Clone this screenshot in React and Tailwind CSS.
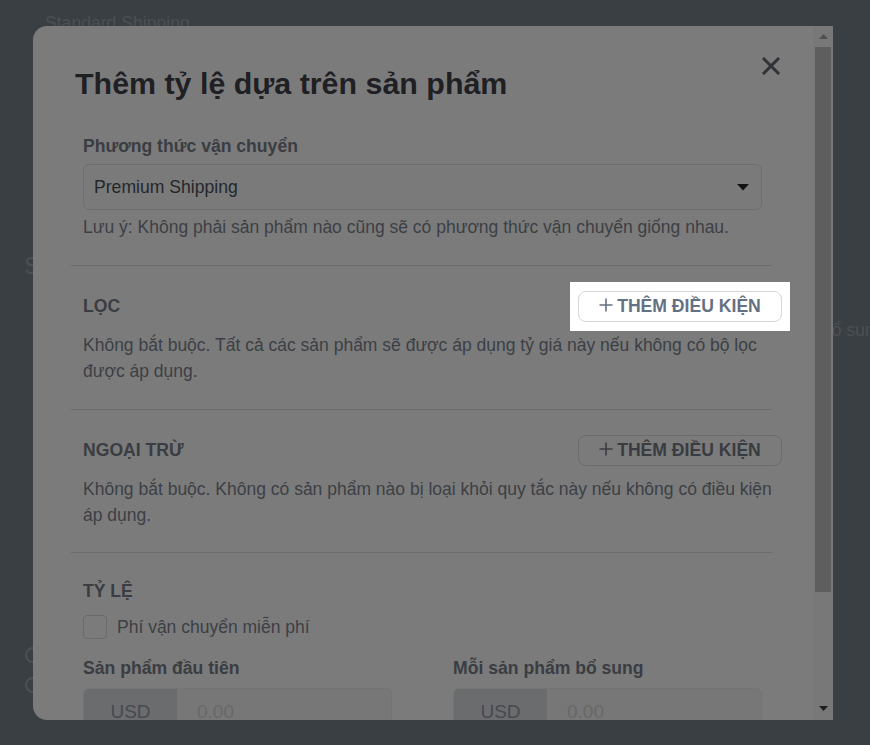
import React from "react";

const font = "font-['Liberation_Sans',Arial,sans-serif]";

const CloseIcon = () => (
  <svg width="18" height="18" viewBox="0 0 18 18" className="shrink-0">
    <path d="M2 2L16 16M16 2L2 16" stroke="#2f3236" strokeWidth="3" strokeLinecap="square" />
  </svg>
);

const PlusIcon = ({ color }) => (
  <svg width="14" height="14" viewBox="0 0 14 14" className="-mt-[3px] shrink-0">
    <path d="M7 0.5V13.5M0.5 7H13.5" stroke={color} strokeWidth="1.6" />
  </svg>
);

const AddButton = ({ highlighted }) => (
  <div className={highlighted ? "-mr-[30px] bg-white px-2 py-[9px]" : "-mr-[30px] px-2 py-[9px]"}>
    <button
      className={
        highlighted
          ? "flex h-[31px] w-[204px] items-center justify-center gap-[4px] rounded-lg border border-[#d5d7da] text-[17.6px] font-bold text-[#647183]"
          : "flex h-[31px] w-[204px] items-center justify-center gap-[4px] rounded-lg border border-[#6b6b6b] text-[17.6px] font-bold text-[#393c41]"
      }
    >
      <PlusIcon color={highlighted ? "#647183" : "#393c41"} />
      THÊM ĐIỀU KIỆN
    </button>
  </div>
);

const CurrencyInput = () => (
  <div className="mt-2 flex h-[48px] overflow-hidden rounded-md border border-[#747474] bg-[#777777]">
    <div className="flex w-[93px] items-center justify-center bg-[#6b6c6e] text-[19px] text-[#46494e]">USD</div>
    <div className="flex flex-1 items-center pl-[20px] text-[19px] text-[#686868]">0.00</div>
  </div>
);

export default function App() {
  return (
    <div className={`relative h-[745px] w-[870px] overflow-hidden bg-[#3a3f43] ${font}`}>
      {/* page behind the overlay */}
      <div className="absolute left-[45px] top-[11px] text-[17.6px] leading-6 text-[#4b5054]">Standard Shipping</div>
      <div className="absolute left-[24px] top-[248px] text-[24px] text-[#4b5054]">S</div>
      <div className="absolute left-[822px] top-[318px] whitespace-nowrap text-[17.6px] leading-6 text-[#4b5054]">bổ sung</div>
      <div className="absolute left-[25px] top-[647px] h-4 w-4 rounded-full border-2 border-[#4b5054]" />
      <div className="absolute left-[25px] top-[677px] h-4 w-4 rounded-full border-2 border-[#4b5054]" />

      {/* modal */}
      <div className="absolute left-[33px] top-[26px] flex h-[694px] w-[800px] overflow-hidden rounded-l-[14px] bg-[#7b7b7b]">
        <div className="flex-1 overflow-hidden pl-[38px] pr-[41px] pt-[38px]">
          <div className="flex items-start justify-between">
            <h2 className="ml-1 pt-[3px] text-[30.4px] font-bold leading-[33px] text-[#1f2024]">Thêm tỷ lệ dựa trên sản phẩm</h2>
            <div className="-mr-[8px] -mt-[7px]">
              <CloseIcon />
            </div>
          </div>

          {/* shipping method */}
          <div className="mt-[34px] border-b border-[#6c6c6c] px-3 pb-[26px]">
            <div className="text-[17.6px] font-bold leading-6 text-[#3a3d42]">Phương thức vận chuyển</div>
            <div className="-mr-[2px] mt-[6px] flex h-[46px] items-center justify-between rounded-md border border-[#6e6e6e] bg-[#7a7a7a] pl-[10px] pr-[12px]">
              <span className="text-[17.6px] text-[#24272b]">Premium Shipping</span>
              <svg width="12" height="7" viewBox="0 0 12 7">
                <path d="M0 0H12L6 6.5Z" fill="#111214" />
              </svg>
            </div>
            <p className="mt-[5px] text-[17.5px] leading-6 text-[#3c4045]">
              Lưu ý: Không phải sản phẩm nào cũng sẽ có phương thức vận chuyển giống nhau.
            </p>
          </div>

          {/* filter */}
          <div className="border-b border-[#6c6c6c] px-3 pb-[25px] pt-4">
            <div className="flex h-[49px] items-center justify-between">
              <span className="text-[17.6px] font-bold text-[#3a3d42]">LỌC</span>
              <AddButton highlighted />
            </div>
            <p className="mt-px whitespace-nowrap text-[17.5px] leading-[26px] text-[#3c4045]">
              Không bắt buộc. Tất cả các sản phẩm sẽ được áp dụng tỷ giá này nếu không có bộ lọc
              <br />
              được áp dụng.
            </p>
          </div>

          {/* exclusions */}
          <div className="border-b border-[#6c6c6c] px-3 pb-[24px] pt-4">
            <div className="flex h-[49px] items-center justify-between">
              <span className="text-[17.6px] font-bold text-[#3a3d42]">NGOẠI TRỪ</span>
              <AddButton />
            </div>
            <p className="mt-px whitespace-nowrap text-[17.5px] leading-[26px] text-[#3c4045]">
              Không bắt buộc. Không có sản phẩm nào bị loại khỏi quy tắc này nếu không có điều kiện
              <br />
              áp dụng.
            </p>
          </div>

          {/* rates */}
          <div className="px-3 pt-[26px]">
            <div className="text-[17.6px] font-bold leading-6 text-[#3a3d42]">TỶ LỆ</div>
            <label className="mt-[11px] flex items-center gap-[10px]">
              <span className="h-6 w-6 rounded border border-[#6a6a6a]" />
              <span className="text-[17.5px] text-[#3c4045]">Phí vận chuyển miễn phí</span>
            </label>
            <div className="mt-[16px] grid grid-cols-[309px_309px] gap-x-[61px]">
              <div>
                <div className="text-[17.6px] font-bold leading-6 text-[#3a3d42]">Sản phẩm đầu tiên</div>
                <CurrencyInput />
              </div>
              <div>
                <div className="text-[17.6px] font-bold leading-6 text-[#3a3d42]">Mỗi sản phẩm bổ sung</div>
                <CurrencyInput />
              </div>
            </div>
          </div>
        </div>

        {/* scrollbar */}
        <div className="flex w-[20px] flex-col bg-[#787878]">
          <div className="flex h-[21px] items-center justify-center">
            <svg width="9" height="5" viewBox="0 0 9 5">
              <path d="M0 5H9L4.5 0Z" fill="#505050" />
            </svg>
          </div>
          <div className="mx-[2px] h-[545px] bg-[#5e5e5e]" />
          <div className="flex-1" />
          <div className="flex h-[24px] items-center justify-center">
            <svg width="9" height="5" viewBox="0 0 9 5">
              <path d="M0 0H9L4.5 5Z" fill="#1e1e1e" />
            </svg>
          </div>
        </div>
      </div>
    </div>
  );
}
